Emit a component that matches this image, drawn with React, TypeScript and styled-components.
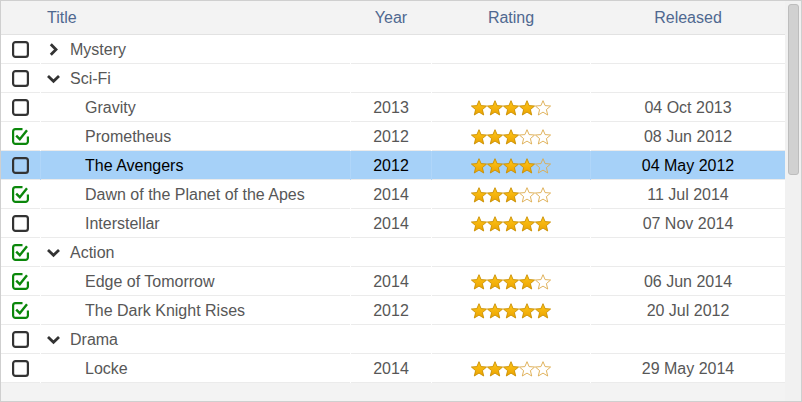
import React from "react";
import styled, { createGlobalStyle } from "styled-components";

const Global = createGlobalStyle`
  html, body { margin: 0; padding: 0; background: #fff; overflow: hidden; }
  * { box-sizing: border-box; }
`;

const COLS = "39px 309px 80px 158px 194px";

const Frame = styled.div`
  width: 802px;
  height: 402px;
  border: 1px solid #cfcfcf;
  background: #f3f3f3;
  display: flex;
  font-family: "Liberation Sans", Arial, sans-serif;
  font-size: 16px;
  overflow: hidden;
`;

const Table = styled.div`
  width: 784px;
  display: flex;
  flex-direction: column;
`;

const HeaderRow = styled.div`
  display: grid;
  grid-template-columns: ${COLS};
  column-gap: 1px;
  height: 34px;
  border-bottom: 1px solid #e2e2e2;
  background: #f3f3f3;
`;

const HeaderCell = styled.div<{ $align?: string }>`
  display: flex;
  align-items: center;
  justify-content: ${(p) => p.$align || "center"};
  padding-left: ${(p) => (p.$align === "flex-start" ? "6px" : "0")};
  color: #4f6890;
`;

const Row = styled.div<{ $selected?: boolean }>`
  display: grid;
  grid-template-columns: ${COLS};
  column-gap: 1px;
  height: 29px;
  background: ${(p) => (p.$selected ? "#b0d6f9" : "#ffffff")};
`;

const Cell = styled.div<{ $selected?: boolean; $align?: string; $indent?: number }>`
  display: flex;
  align-items: center;
  justify-content: ${(p) => p.$align || "center"};
  padding-top: 2px;
  padding-left: ${(p) => (p.$indent !== undefined ? `${p.$indent}px` : "0")};
  background: ${(p) => (p.$selected ? "#a6d1f8" : "#ffffff")};
  border-bottom: 1px solid #ebebeb;
  color: ${(p) => (p.$selected ? "#000" : "#575757")};
  white-space: nowrap;
`;

const ChevronBox = styled.span`
  display: inline-flex;
  width: 23px;
  align-items: center;
  margin-top: -2px;
`;

const Stars = styled.div`
  display: flex;
  margin-top: -1px;
`;

const ScrollTrack = styled.div`
  width: 16px;
  background: #f1f1f1;
  padding: 3px 2px 0 3px;
`;

const ScrollThumb = styled.div`
  width: 11px;
  height: 171px;
  background: #d1d1d1;
  border: 1px solid #bdbdbd;
  border-radius: 3px;
`;

const Unchecked = () => (
  <svg width="17" height="17" viewBox="0 0 17 17" style={{ marginTop: -2 }}>
    <rect x="1.1" y="1.1" width="14.8" height="14.8" rx="2.4" fill="none" stroke="#333" strokeWidth="2.2" />
  </svg>
);

const Checked = () => (
  <svg width="17" height="17" viewBox="0 0 17 17" style={{ marginTop: -2 }}>
    <path d="M10.5 1.1 H3.5 A2.4 2.4 0 0 0 1.1 3.5 V13.5 A2.4 2.4 0 0 0 3.5 15.9 H13.5 A2.4 2.4 0 0 0 15.9 13.5 V8.5" fill="none" stroke="#0b870b" strokeWidth="2.2" />
    <path d="M4.2 7.6 L7.8 11.2 L15 2.2" fill="none" stroke="#0b870b" strokeWidth="2.4" />
  </svg>
);

const ChevronRight = () => (
  <svg width="13" height="13" viewBox="0 0 13 13">
    <path d="M3.8 1.2 L9 6.5 L3.8 11.8" fill="none" stroke="#333" strokeWidth="2.8" />
  </svg>
);

const ChevronDown = () => (
  <svg width="13" height="13" viewBox="0 0 13 13">
    <path d="M1 4 L6.5 9.2 L12 4" fill="none" stroke="#333" strokeWidth="2.8" />
  </svg>
);

const STAR =
  "8,0.7 10.1,5.6 15.6,6 11.4,9.6 12.7,15 8,12.1 3.3,15 4.6,9.6 0.4,6 5.9,5.6";

const Star = ({ filled }: { filled: boolean }) => (
  <svg width="16" height="16" viewBox="0 0 16 16">
    <defs>
      <linearGradient id="gold" x1="0" y1="0" x2="0" y2="1">
        <stop offset="0" stopColor="#ffc61a" />
        <stop offset="1" stopColor="#eba300" />
      </linearGradient>
    </defs>
    <polygon
      points={STAR}
      fill={filled ? "url(#gold)" : "none"}
      stroke={filled ? "#c98e00" : "#dcaa4c"}
      strokeWidth="0.9"
      strokeLinejoin="round"
    />
  </svg>
);

type Item =
  | { kind: "group"; title: string; open: boolean; checked: boolean }
  | {
      kind: "movie";
      title: string;
      year: number;
      rating: number;
      released: string;
      checked: boolean;
      selected?: boolean;
    };

const items: Item[] = [
  { kind: "group", title: "Mystery", open: false, checked: false },
  { kind: "group", title: "Sci-Fi", open: true, checked: false },
  { kind: "movie", title: "Gravity", year: 2013, rating: 4, released: "04 Oct 2013", checked: false },
  { kind: "movie", title: "Prometheus", year: 2012, rating: 3, released: "08 Jun 2012", checked: true },
  { kind: "movie", title: "The Avengers", year: 2012, rating: 4, released: "04 May 2012", checked: false, selected: true },
  { kind: "movie", title: "Dawn of the Planet of the Apes", year: 2014, rating: 3, released: "11 Jul 2014", checked: true },
  { kind: "movie", title: "Interstellar", year: 2014, rating: 5, released: "07 Nov 2014", checked: false },
  { kind: "group", title: "Action", open: true, checked: true },
  { kind: "movie", title: "Edge of Tomorrow", year: 2014, rating: 4, released: "06 Jun 2014", checked: true },
  { kind: "movie", title: "The Dark Knight Rises", year: 2012, rating: 5, released: "20 Jul 2012", checked: true },
  { kind: "group", title: "Drama", open: true, checked: false },
  { kind: "movie", title: "Locke", year: 2014, rating: 3, released: "29 May 2014", checked: false },
];

export default function App() {
  return (
    <>
      <Global />
      <Frame>
        <Table>
          <HeaderRow>
            <HeaderCell />
            <HeaderCell $align="flex-start">Title</HeaderCell>
            <HeaderCell>Year</HeaderCell>
            <HeaderCell>Rating</HeaderCell>
            <HeaderCell>Released</HeaderCell>
          </HeaderRow>
          {items.map((it, i) => {
            const sel = it.kind === "movie" && !!it.selected;
            return (
              <Row key={i} $selected={sel}>
                <Cell $selected={sel}>{it.checked ? <Checked /> : <Unchecked />}</Cell>
                {it.kind === "group" ? (
                  <>
                    <Cell $align="flex-start" $indent={6}>
                      <ChevronBox>{it.open ? <ChevronDown /> : <ChevronRight />}</ChevronBox>
                      {it.title}
                    </Cell>
                    <Cell />
                    <Cell />
                    <Cell />
                  </>
                ) : (
                  <>
                    <Cell $selected={sel} $align="flex-start" $indent={44}>
                      {it.title}
                    </Cell>
                    <Cell $selected={sel}>{it.year}</Cell>
                    <Cell $selected={sel}>
                      <Stars>
                        {[0, 1, 2, 3, 4].map((s) => (
                          <Star key={s} filled={s < it.rating} />
                        ))}
                      </Stars>
                    </Cell>
                    <Cell $selected={sel}>{it.released}</Cell>
                  </>
                )}
              </Row>
            );
          })}
        </Table>
        <ScrollTrack>
          <ScrollThumb />
        </ScrollTrack>
      </Frame>
    </>
  );
}
